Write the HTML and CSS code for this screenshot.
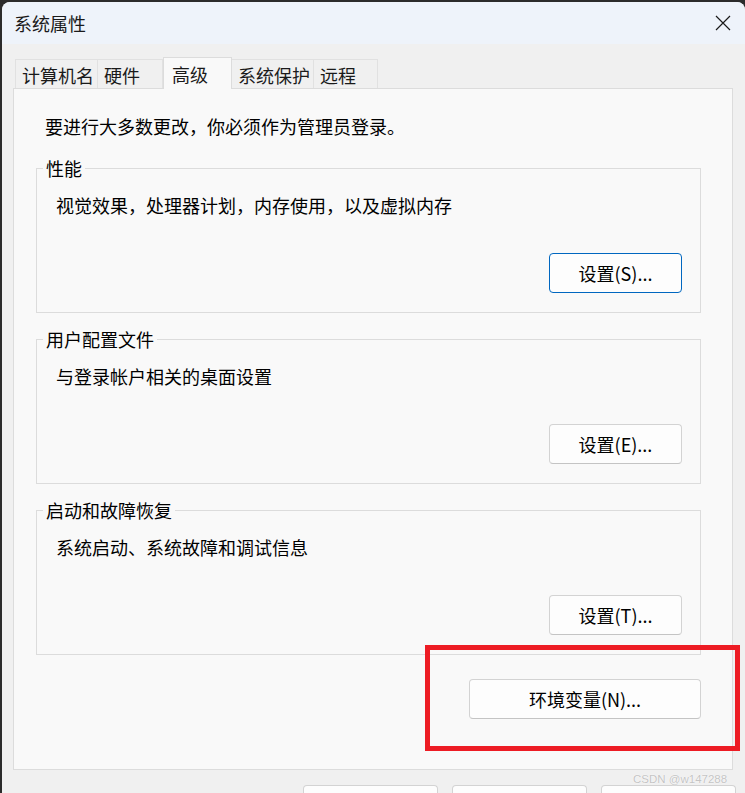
FILE: index.html
```html
<!DOCTYPE html>
<html lang="zh-CN">
<head>
<meta charset="utf-8">
<title>系统属性</title>
<link rel="stylesheet" href="styles.css">
</head>
<body>
<div class="window">
  <div class="titlebar">
    <span class="title">系统属性</span>
    <svg class="close" width="16" height="16" viewBox="0 0 16 16"><path d="M1 1 L15 15 M15 1 L1 15" stroke="#1a1a1a" stroke-width="1.2" fill="none"/></svg>
  </div>
  <div class="content">
    <div class="tabs">
      <div class="tab w83">计算机名</div>
      <div class="tab w65">硬件</div>
      <div class="tab active w69">高级</div>
      <div class="tab w82">系统保护</div>
      <div class="tab w64">远程</div>
    </div>
    <div class="panel">
      <p class="notice">要进行大多数更改，你必须作为管理员登录。</p>
      <fieldset class="group">
        <legend>性能</legend>
        <p class="desc">视觉效果，处理器计划，内存使用，以及虚拟内存</p>
        <div class="btn-row"><button class="btn default">设置(S)...</button></div>
      </fieldset>
      <fieldset class="group">
        <legend>用户配置文件</legend>
        <p class="desc">与登录帐户相关的桌面设置</p>
        <div class="btn-row"><button class="btn">设置(E)...</button></div>
      </fieldset>
      <fieldset class="group">
        <legend>启动和故障恢复</legend>
        <p class="desc">系统启动、系统故障和调试信息</p>
        <div class="btn-row"><button class="btn">设置(T)...</button></div>
      </fieldset>
      <div class="env-row"><button class="btn env">环境变量(N)...</button></div>
    </div>
    <div class="footer">
      <button class="btn foot" aria-label="确定"></button>
      <button class="btn foot" aria-label="取消"></button>
      <button class="btn foot" aria-label="应用"></button>
    </div>
  </div>
</div>
<div class="annot"></div>
<div class="watermark">CSDN @w147288</div>
</body>
</html>
```

FILE: styles.css
```css
html, body {
  margin: 0;
  padding: 0;
}
body {
  background: #2b2b2b;
  overflow: hidden;
  width: 745px;
  height: 793px;
  font-family: "Noto Sans CJK SC", "Noto Sans", sans-serif;
  font-size: 18px;
  color: #000;
  position: relative;
}
.window {
  margin: 2px 0 0 2px;
  width: 743px;
  height: 900px;
  background: #f0f0f0;
  border-radius: 8px 8px 0 0;
  overflow: hidden;
}
.titlebar {
  height: 42px;
  background: #eef3fa;
  display: flex;
  align-items: center;
  justify-content: space-between;
  padding: 0 14px 0 12px;
}
.title {
  line-height: 22px;
  color: #1a1a1a;
}
.close {
  display: block;
  margin-top: -1px;
}
.content {
  padding: 13px 12px 0 11px;
}
.tabs {
  display: flex;
  align-items: flex-end;
  margin-left: 2px;
  height: 31px;
}
.tab {
  box-sizing: border-box;
  height: 29px;
  padding: 2px 0 0 6px;
  display: flex;
  align-items: center;
  border: 1px solid #e1e1e1;
  border-bottom: none;
  background: #f0f0f0;
  color: #1a1a1a;
  line-height: 22px;
  white-space: nowrap;
}
.tab + .tab {
  border-left: none;
}
.tab.active {
  height: 32px;
  padding: 0 0 0 8px;
  margin-bottom: -1px;
  background: #f9f9f9;
  border: 1px solid #dcdcdc;
  border-bottom: none;
  position: relative;
  z-index: 1;
}
.tab.active + .tab {
  border-left: none;
}
.w83 { width: 83px; }
.w65 { width: 65px; }
.w69 { width: 69px; }
.w82 { width: 82px; }
.w64 { width: 64px; }
.panel {
  box-sizing: border-box;
  width: 720px;
  background: #f9f9f9;
  border: 1px solid #dcdcdc;
  padding: 26px 31px 50px 22px;
}
.notice {
  margin: 0 0 20px 9px;
  line-height: 22px;
}
.group {
  margin: 0;
  padding: 0 18px 19px 6px;
  border: 1px solid #dcdcdc;
  min-inline-size: 0;
}
.group + .group {
  margin-top: 15px;
}
.group legend {
  padding: 0 3px;
  line-height: 22px;
}
.desc {
  margin: 15px 0 0 13px;
  line-height: 22px;
}
.btn-row {
  display: flex;
  justify-content: flex-end;
  margin-top: 37px;
}
.btn {
  box-sizing: border-box;
  width: 133px;
  height: 40px;
  padding: 0;
  background: #fdfdfd;
  border: 1px solid #d3d3d3;
  border-bottom-color: #c4c4c4;
  border-radius: 4px;
  font-family: inherit;
  font-size: 18px;
  color: #000;
}
.btn.default {
  border: 1px solid #0067c0;
}
.env-row {
  display: flex;
  justify-content: flex-end;
  margin-top: 24px;
}
.btn.env {
  width: 232px;
}
.footer {
  display: flex;
  justify-content: flex-end;
  gap: 14px;
  margin: 15px -3px 0 0;
}
.btn.foot {
  width: 135px;
}
.annot {
  position: absolute;
  left: 425px;
  top: 645px;
  width: 315px;
  height: 106px;
  box-sizing: border-box;
  border: 5px solid #ed1c24;
}
.watermark {
  position: absolute;
  left: 633px;
  top: 772px;
  font-family: "Liberation Sans", Arial, sans-serif;
  font-size: 11.5px;
  line-height: 14px;
  color: #c4c4c4;
  text-shadow: 0 0 1px #fff, 0 0 1px #fff;
  white-space: nowrap;
}
```
